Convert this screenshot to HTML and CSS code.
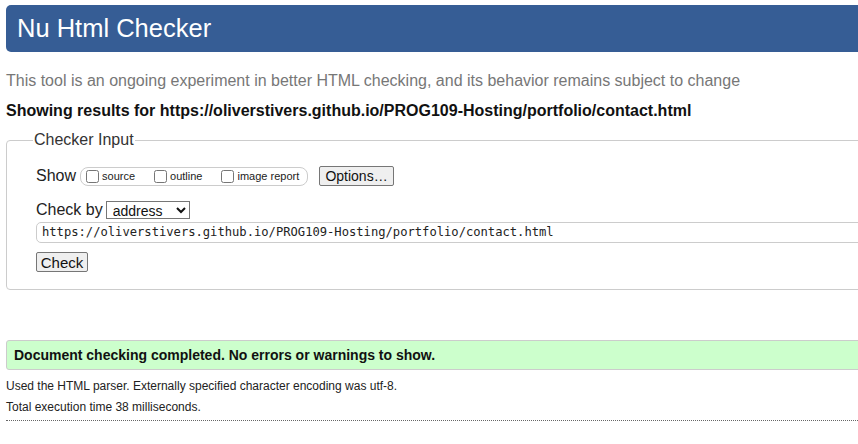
FILE: index.html
```html
<!DOCTYPE html>
<html>
<head>
<meta charset="utf-8">
<title>Nu Html Checker</title>
<link rel="stylesheet" href="styles.css">
</head>
<body>
<div class="page">
  <h1 class="banner">Nu Html Checker</h1>
  <p class="intro">This tool is an ongoing experiment in better HTML checking, and its behavior remains subject to change</p>
  <p class="showing">Showing results for https://oliverstivers.github.io/PROG109-Hosting/portfolio/contact.html</p>
  <fieldset class="input-box">
    <legend class="legend">Checker Input</legend>
    <div class="row show-row">
      <span class="row-label">Show</span>
      <span class="opts">
        <label class="opt"><input type="checkbox" class="cb">source</label>
        <label class="opt"><input type="checkbox" class="cb">outline</label>
        <label class="opt"><input type="checkbox" class="cb">image report</label>
      </span>
      <button class="btn btn-options" type="button">Options…</button>
    </div>
    <div class="row by-row">
      <span class="row-label">Check by</span>
      <select class="sel"><option>address</option></select>
    </div>
    <div class="url">https://oliverstivers.github.io/PROG109-Hosting/portfolio/contact.html</div>
    <button class="btn btn-check" type="button">Check</button>
  </fieldset>
  <div class="success">Document checking completed. No errors or warnings to show.</div>
  <p class="meta">Used the HTML parser. Externally specified character encoding was utf-8.</p>
  <p class="meta">Total execution time 38 milliseconds.</p>
  <div class="rule"></div>
</div>
</body>
</html>
```
FILE: styles.css
```css
html { overflow: hidden; }
body {
  margin: 0;
  background: #fff;
  font-family: "Liberation Sans", Arial, sans-serif;
  color: #111;
}
.page {
  width: 900px;
  padding: 5px 0 0 6px;
}
.banner {
  margin: 0;
  height: 47px;
  box-sizing: border-box;
  background: #365d95;
  color: #fff;
  border-radius: 5px;
  font-weight: normal;
  font-size: 25.5px;
  line-height: 47px;
  padding-left: 11px;
}
.intro {
  margin: 18px 0 0 0;
  font-size: 16px;
  line-height: 22px;
  color: #777;
}
.showing {
  margin: 8px 0 0 0;
  font-size: 16px;
  line-height: 22px;
  font-weight: bold;
  color: #111;
}
.input-box {
  margin: 9px 0 0 0;
  border: 1px solid #ccc;
  border-radius: 4px;
  padding: 4px 0 17px 29px;
  min-inline-size: 0;
}
.legend {
  font-size: 16px;
  color: #333;
  padding: 0 1px;
  margin-left: -3px;
}
.row {
  display: flex;
  align-items: center;
}
.show-row {
  margin-top: 13px;
  height: 20px;
}
.row-label {
  font-size: 16px;
  color: #222;
}
.opts {
  display: inline-flex;
  align-items: center;
  margin-left: 4px;
  height: 19px;
  box-sizing: border-box;
  border: 1px solid #ccc;
  border-radius: 8px;
  padding: 0 0 0 5px;
  width: 228px;
}
.opt {
  display: inline-flex;
  align-items: center;
  font-size: 11px;
  color: #222;
  margin-right: 19px;
}
.opt:last-child { margin-right: 0; }
.cb {
  margin: 0 3px 0 0;
  width: 13px;
  height: 13px;
}
.btn {
  font-family: "Liberation Sans", Arial, sans-serif;
  background: #efefef;
  border: 1px solid #767676;
  border-radius: 2px;
  color: #111;
  padding: 0;
  box-sizing: border-box;
}
.btn-options {
  margin-left: 11px;
  width: 75px;
  height: 20px;
  font-size: 14px;
}
.by-row {
  margin-top: 15px;
  height: 18px;
}
.sel {
  margin-left: 3px;
  width: 84px;
  height: 18px;
  font-family: "Liberation Sans", Arial, sans-serif;
  font-size: 14px;
  border: 1px solid #767676;
  border-radius: 0;
  background: #fff;
  color: #111;
  padding: 0 0 0 2px;
}
.url {
  margin-top: 3px;
  height: 21px;
  box-sizing: border-box;
  border: 1px solid #ccc;
  border-radius: 5px;
  padding-left: 5px;
  font-family: "DejaVu Sans Mono", monospace;
  font-size: 12.15px;
  line-height: 19px;
  color: #222;
}
.btn-check {
  display: block;
  margin-top: 9px;
  width: 52px;
  height: 20px;
  font-size: 15px;
}
.success {
  margin-top: 50px;
  height: 30px;
  box-sizing: border-box;
  background: #ccffcc;
  border: 1px solid #ccc;
  border-radius: 3px;
  padding-left: 7px;
  font-size: 14px;
  font-weight: bold;
  line-height: 28px;
  color: #111;
}
.meta {
  margin: 0;
  font-size: 12px;
  color: #222;
  line-height: 21px;
}
.success + .meta { margin-top: 6px; }
.rule {
  margin-top: 2px;
  border-top: 1px dotted #666;
}
```
